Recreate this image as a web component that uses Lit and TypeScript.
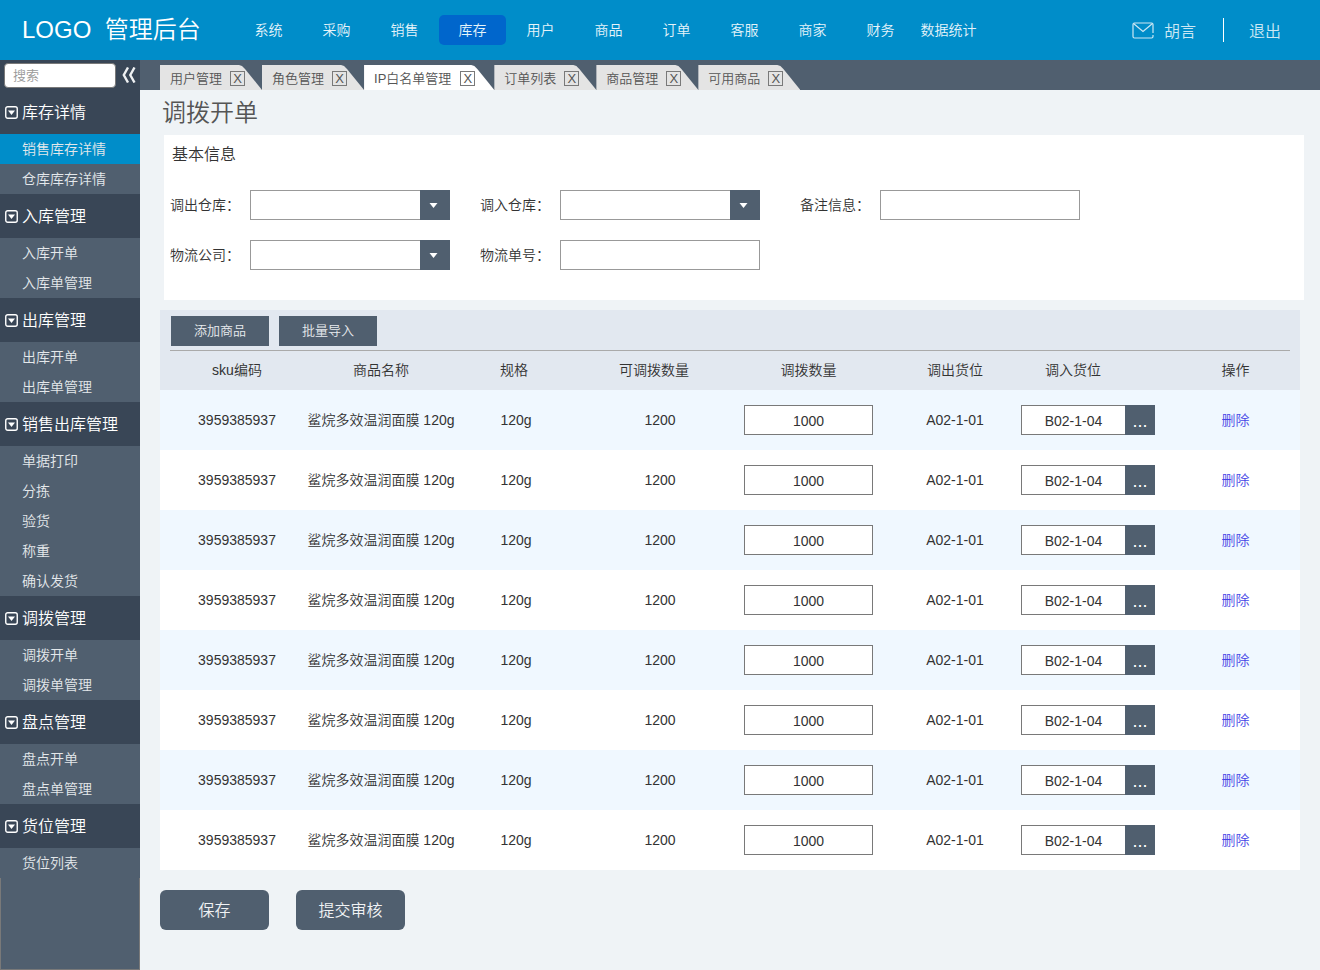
import { LitElement, html, css } from "lit";
import { customElement, property, state } from "lit/decorators.js";
import { classMap } from "lit/directives/class-map.js";

const NAV = ["系统", "采购", "销售", "库存", "用户", "商品", "订单", "客服", "商家", "财务", "数据统计"];
const TABS = ["用户管理", "角色管理", "IP白名单管理", "订单列表", "商品管理", "可用商品"];
const GROUPS: { title: string; items: string[] }[] = [
  { title: "库存详情", items: ["销售库存详情", "仓库库存详情"] },
  { title: "入库管理", items: ["入库开单", "入库单管理"] },
  { title: "出库管理", items: ["出库开单", "出库单管理"] },
  { title: "销售出库管理", items: ["单据打印", "分拣", "验货", "称重", "确认发货"] },
  { title: "调拨管理", items: ["调拨开单", "调拨单管理"] },
  { title: "盘点管理", items: ["盘点开单", "盘点单管理"] },
  { title: "货位管理", items: ["货位列表"] },
];
const ROWS = Array.from({ length: 8 }, () => ({
  sku: "3959385937",
  name: "鲨烷多效温润面膜 120g",
  spec: "120g",
  available: "1200",
  quantity: "1000",
  from: "A02-1-01",
  to: "B02-1-04",
}));

const base = css`
  *, *::before, *::after { box-sizing: border-box; }
  button, input, select {
    font: inherit;
    color: inherit;
    margin: 0;
    padding: 0;
    border: 0;
    border-radius: 0;
    background: none;
  }
  button { cursor: pointer; }
  a { color: inherit; text-decoration: none; }
  h1, h2 { margin: 0; font-weight: inherit; }
`;

@customElement("top-bar")
class TopBar extends LitElement {
  @state() private current = "库存";

  static styles = [base, css`
    :host {
      display: flex;
      align-items: center;
      height: 60px;
      padding: 0 39px 0 22px;
      background: #008dc9;
      color: #fff;
    }
    .logo { width: 213px; padding-bottom: 5px; font-size: 24px; white-space: pre; }
    .nav { display: flex; flex: 1; gap: 1px; }
    .nav-link {
      width: 67px;
      line-height: 30px;
      border-radius: 5px;
      text-align: center;
      white-space: nowrap;
      color: #e6f4fa;
    }
    .nav-link.current { background: #0066cc; }
    .account { display: flex; align-items: center; font-size: 16px; color: #cce8f4; }
    .mail { display: block; margin-right: 10px; }
    .exit {
      display: flex;
      align-items: center;
      height: 24px;
      margin-left: 27px;
      padding-left: 25px;
      border-left: 1px solid #fff;
    }
  `];

  render() {
    return html`
      <div class="logo">LOGO  管理后台</div>
      <nav class="nav">
        ${NAV.map((label) => html`
          <a class=${classMap({ "nav-link": true, current: label === this.current })}
            href="#" @click=${() => (this.current = label)}>${label}</a>`)}
      </nav>
      <div class="account">
        <svg class="mail" width="22" height="17" viewBox="0 0 22 17" fill="none" stroke="#cce8f4" stroke-width="1.2">
          <path d="M21 11V2.5Q21 1 19.5 1H2.5Q1 1 1 2.5V14.5Q1 16 2.5 16H19.5Q21 16 21 14.5V13" />
          <path d="M1.500 1.500L11 9.500L20.500 1.500" />
        </svg>
        <a href="#">胡言</a>
        <a class="exit" href="#">退出</a>
      </div>`;
  }
}

@customElement("side-menu")
class SideMenu extends LitElement {
  @state() private current = "销售库存详情";

  static styles = [base, css`
    :host {
      display: flex;
      flex-direction: column;
      background: #505f6f;
      color: #fff;
    }
    .search {
      display: flex;
      align-items: center;
      gap: 6px;
      height: 30px;
      padding: 0 4px;
      background: #394656;
    }
    .search-box {
      width: 112px;
      height: 25px;
      padding: 0 8px;
      border: 1px solid #797979;
      border-radius: 4px;
      background: #fff;
      color: #333;
      font-size: 13px;
    }
    .search-box::placeholder { color: #999; opacity: 1; }
    .fold, .fold svg { display: block; }
    .group {
      display: flex;
      align-items: center;
      gap: 4px;
      width: 100%;
      height: 44px;
      padding-left: 5px;
      background: #394656;
      font-size: 16px;
    }
    .group-title { padding-bottom: 2px; }
    .item { display: block; padding-left: 22px; line-height: 30px; color: #e4e8eb; }
    .item.current { background: #008dc9; }
    .rest { flex: 1; border: 1px solid #797979; border-top: 0; }
  `];

  render() {
    return html`
      <div class="search">
        <input class="search-box" type="text" placeholder="搜索" aria-label="搜索" />
        <button class="fold" aria-label="收起">
          <svg width="14" height="16" viewBox="0 0 14 16" fill="none" stroke="#eef0f2" stroke-width="2.4">
            <path d="M6 0.500L1.800 8L6 15.500M12.500 0.500L8.300 8L12.500 15.500" />
          </svg>
        </button>
      </div>
      ${GROUPS.map((group) => html`
        <button class="group">
          <svg width="13" height="13" viewBox="0 0 13 13">
            <rect x="0.750" y="0.750" width="11.500" height="11.500" rx="2" fill="none" stroke="#fff" stroke-width="1.400" />
            <path d="M3 4.500H10L6.500 9Z" fill="#fff" />
          </svg>
          <span class="group-title">${group.title}</span>
        </button>
        ${group.items.map((item) => html`
          <a class=${classMap({ item: true, current: item === this.current })}
            href="#" @click=${() => (this.current = item)}>${item}</a>`)}`)}
      <div class="rest"></div>`;
  }
}

@customElement("tab-strip")
class TabStrip extends LitElement {
  @state() private current = "IP白名单管理";

  static styles = [base, css`
    :host {
      display: flex;
      align-items: flex-end;
      height: 30px;
      padding-left: 20px;
      background: #505f6f;
      color: #555;
      font-size: 13px;
    }
    .tab {
      display: flex;
      align-items: center;
      gap: 8px;
      height: 25px;
      padding: 2px 17px 0 10px;
      background: #e4e4e4;
      clip-path: polygon(0 0, calc(100% - 23px) 0, calc(100% - 20px) 1px, calc(100% - 17px) 4px, 100% 100%, 0 100%);
    }
    .tab.current { gap: 9px; padding-right: 19px; background: #fff; }
    .tab-link { padding-bottom: 3px; }
    .close {
      width: 15px;
      height: 15px;
      border: 1px solid #797979;
      line-height: 13px;
      text-align: center;
    }
  `];

  render() {
    return TABS.map((label) => html`
      <div class=${classMap({ tab: true, current: label === this.current })}>
        <a class="tab-link" href="#" @click=${() => (this.current = label)}>${label}</a>
        <button class="close" aria-label="关闭${label}">X</button>
      </div>`);
  }
}

@customElement("form-field")
class FormField extends LitElement {
  @property() label = "";
  @property() kind: "text" | "select" = "text";

  static styles = [base, css`
    :host { display: flex; align-items: center; }
    .label { width: 80px; padding-bottom: 2px; }
    .control { position: relative; width: 200px; height: 30px; }
    .box {
      appearance: none;
      display: block;
      width: 100%;
      height: 100%;
      padding: 0 8px;
      border: 1px solid #999;
      background: #fff;
    }
    .arrow {
      position: absolute;
      inset: 0 0 0 auto;
      display: flex;
      align-items: center;
      width: 30px;
      padding-left: 9px;
      background: #505f6f;
      pointer-events: none;
    }
  `];

  render() {
    return html`
      <label class="label" for="box">${this.label}：</label>
      <div class="control">
        ${this.kind === "select"
          ? html`<select class="box" id="box"><option></option></select>
              <span class="arrow">
                <svg width="9" height="5" viewBox="0 0 9 5"><path d="M0.500 0H8.500L4.500 5Z" fill="#fff" /></svg>
              </span>`
          : html`<input class="box" id="box" type="text" />`}
      </div>`;
  }
}

@customElement("goods-table")
class GoodsTable extends LitElement {
  static styles = [base, css`
    :host { display: block; background: #e2e8f0; }
    .tools {
      display: flex;
      align-items: center;
      gap: 10px;
      height: 41px;
      margin: 0 10px;
      padding: 2px 0 0 1px;
      border-bottom: 1px solid #aaa;
    }
    .tool {
      width: 98px;
      height: 30px;
      padding-bottom: 3px;
      background: #505f6f;
      color: #e8ebee;
      font-size: 13px;
    }
    .table { width: 100%; table-layout: fixed; border-collapse: collapse; text-align: center; }
    .c-sku { width: 146px; }
    .c-name { width: 150px; }
    .c-spec { width: 120px; }
    .c-available { width: 168px; }
    .c-quantity { width: 129px; }
    .c-from { width: 148px; }
    .c-to { width: 134px; }
    .c-action { width: 145px; }
    th { height: 39px; padding: 0 0 3px; font-weight: inherit; }
    td { height: 60px; padding: 0; white-space: nowrap; }
    .row { background: #fff; }
    .row:nth-child(odd) { background: #f0f8ff; }
    .sku { padding-left: 8px; }
    .spec-head { padding-right: 4px; }
    .available-head { padding-right: 12px; }
    .to-head { padding-right: 30px; }
    .from, .action { padding-left: 16px; }
    .name, .delete-cell { padding-bottom: 2px; }
    .input {
      display: block;
      width: 100%;
      height: 30px;
      padding-top: 2px;
      border: 1px solid #797979;
      background: #fff;
      text-align: center;
    }
    .picker { display: flex; }
    .picker .input { flex: 1; min-width: 0; border-right: 0; }
    .more {
      flex: none;
      width: 30px;
      height: 30px;
      padding-top: 2px;
      background: #505f6f;
      color: #fff;
      font-size: 18px;
    }
    .delete { color: #4646e6; }
  `];

  render() {
    return html`
      <div class="tools">
        <button class="tool">添加商品</button>
        <button class="tool">批量导入</button>
      </div>
      <table class="table">
        <colgroup>
          <col class="c-sku" /><col class="c-name" /><col class="c-spec" /><col class="c-available" />
          <col class="c-quantity" /><col class="c-from" /><col class="c-to" /><col class="c-action" />
        </colgroup>
        <thead>
          <tr>
            <th class="sku">sku编码</th>
            <th>商品名称</th>
            <th class="spec-head">规格</th>
            <th class="available-head">可调拨数量</th>
            <th>调拨数量</th>
            <th class="from">调出货位</th>
            <th class="to-head">调入货位</th>
            <th class="action">操作</th>
          </tr>
        </thead>
        <tbody>
          ${ROWS.map((row) => html`
            <tr class="row">
              <td class="sku">${row.sku}</td>
              <td class="name">${row.name}</td>
              <td>${row.spec}</td>
              <td>${row.available}</td>
              <td><input class="input" type="text" aria-label="调拨数量" .value=${row.quantity} /></td>
              <td class="from">${row.from}</td>
              <td>
                <div class="picker">
                  <input class="input" type="text" aria-label="调入货位" .value=${row.to} />
                  <button class="more" aria-label="选择货位">...</button>
                </div>
              </td>
              <td class="action delete-cell"><a class="delete" href="#">删除</a></td>
            </tr>`)}
        </tbody>
      </table>`;
  }
}

@customElement("app-root")
class AppRoot extends LitElement {
  static styles = [base, css`
    :host {
      display: flex;
      flex-direction: column;
      min-height: 100vh;
      background: #eff3f6;
      color: #333;
      font-family: "Liberation Sans", "Noto Sans CJK SC", sans-serif;
      font-size: 14px;
      font-weight: 350;
    }
    .body { display: flex; flex: 1; }
    .side { flex: none; width: 140px; }
    .content { flex: 1; min-width: 0; }
    .main { padding: 0 20px 40px; }
    .title { padding-left: 2px; font-size: 24px; line-height: 45px; color: #555; }
    .card { margin: 0 -4px 10px 4px; padding: 0 6px 30px; background: #fff; }
    .card-title { padding: 5px 2px 20px; font-size: 16px; line-height: 30px; }
    .fields { display: grid; grid-template-columns: 310px 320px 280px; row-gap: 20px; }
    .actions { display: flex; gap: 27px; margin-top: 20px; }
    .action {
      width: 109px;
      height: 40px;
      padding-bottom: 2px;
      border-radius: 6px;
      background: #505f6f;
      color: #f0f2f4;
      font-size: 16px;
    }
  `];

  render() {
    return html`
      <top-bar></top-bar>
      <div class="body">
        <side-menu class="side"></side-menu>
        <div class="content">
          <tab-strip></tab-strip>
          <main class="main">
            <h1 class="title">调拨开单</h1>
            <section class="card">
              <h2 class="card-title">基本信息</h2>
              <div class="fields">
                <form-field label="调出仓库" kind="select"></form-field>
                <form-field label="调入仓库" kind="select"></form-field>
                <form-field label="备注信息"></form-field>
                <form-field label="物流公司" kind="select"></form-field>
                <form-field label="物流单号"></form-field>
              </div>
            </section>
            <goods-table></goods-table>
            <div class="actions">
              <button class="action">保存</button>
              <button class="action">提交审核</button>
            </div>
          </main>
        </div>
      </div>`;
  }
}
